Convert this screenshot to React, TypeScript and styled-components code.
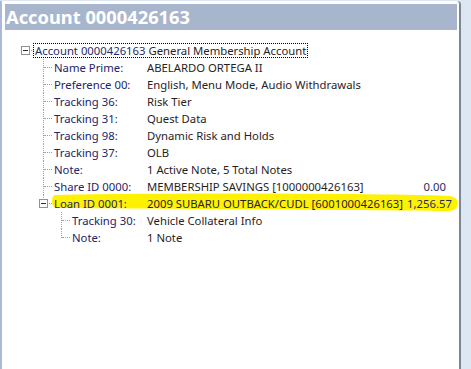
import React from 'react';
import styled, { createGlobalStyle } from 'styled-components';

const Global = createGlobalStyle`
  html, body { margin: 0; padding: 0; }
  body { background: #dce7f3; font-family: "Noto Sans", "Open Sans", sans-serif; }
`;

const Page = styled.div`
  width: 471px;
  height: 369px;
  box-sizing: border-box;
  padding-top: 1px;
  display: flex;
  align-items: stretch;
  background: #dce7f3;
  overflow: hidden;
`;

const Panel = styled.section`
  width: 461px;
  flex: none;
  box-sizing: border-box;
  background: #ffffff;
  border-left: 2px solid #a9bad4;
  border-right: 2px solid #7d8693;
  border-top-right-radius: 4px;
  padding: 3px 2px 0 3px;
  display: flex;
  flex-direction: column;
`;

const Header = styled.h1`
  margin: 0;
  height: 26px;
  padding-left: 1px;
  background: #a8b6cd;
  color: #ffffff;
  font: bold 18.3px/26px "Noto Sans", sans-serif;
`;

const Tree = styled.ul`
  list-style: none;
  margin: 12px 0 0 0;
  padding: 0;
`;

const Row = styled.li<{ $level: number }>`
  position: relative;
  height: 17px;
  display: flex;
  align-items: center;
  padding-left: ${p => 11 + p.$level * 18}px;
  padding-right: 11px;
  font-size: 11.3px;
  line-height: 17px;
  white-space: nowrap;
`;

const Elbow = styled.span<{ $last?: boolean; $root?: boolean }>`
  position: relative;
  z-index: 1;
  flex: none;
  width: 18px;
  height: 17px;
  &::before {
    content: '';
    display: ${p => (p.$root ? 'none' : 'block')};
    position: absolute;
    left: 9px;
    top: 0;
    height: ${p => (p.$last ? '9px' : '17px')};
    border-left: 1px dotted #a0a0a0;
  }
  &::after {
    content: '';
    position: absolute;
    left: 10px;
    right: 0;
    top: 8px;
    border-top: 1px dotted #a0a0a0;
  }
`;

const ExpandBox = styled.span`
  position: absolute;
  z-index: 2;
  left: 5px;
  top: 4px;
  width: 9px;
  height: 9px;
  box-sizing: border-box;
  border: 1px solid #919191;
  background: #ffffff;
  &::after {
    content: '';
    position: absolute;
    left: 1px;
    top: 3px;
    width: 5px;
    height: 1px;
    background: #2b2b2b;
  }
`;

const RootLabel = styled.span`
  position: relative;
  z-index: 1;
  margin-left: -1px;
  padding: 0 1px;
  height: 15px;
  line-height: 14px;
  border: 1px dotted #000000;
  box-sizing: border-box;
  color: #1f2a6b;
`;

const RootName = styled.span`
  color: #2a1d1d;
`;

const Label = styled.span<{ $level: number }>`
  position: relative;
  z-index: 1;
  flex: none;
  box-sizing: border-box;
  width: ${p => 95 - (p.$level - 1) * 18}px;
  padding-left: 2px;
  color: #24246a;
`;

const Value = styled.span`
  position: relative;
  z-index: 1;
  flex: 1;
  display: flex;
  justify-content: space-between;
  color: #2a1d1d;
`;

const Amount = styled.span`
  margin-left: 4px;
  color: #1f2d66;
`;

const Marker = styled.svg`
  position: absolute;
  z-index: 0;
  left: 47px;
  top: -3px;
  width: 408px;
  height: 21px;
  pointer-events: none;
`;

type Node = { label: string; value: string; amount?: string; level: number; last?: boolean; expand?: boolean; mark?: boolean };

const nodes: Node[] = [
  { label: 'Name Prime:', value: 'ABELARDO ORTEGA II', level: 1 },
  { label: 'Preference 00:', value: 'English, Menu Mode, Audio Withdrawals', level: 1 },
  { label: 'Tracking 36:', value: 'Risk Tier', level: 1 },
  { label: 'Tracking 31:', value: 'Quest Data', level: 1 },
  { label: 'Tracking 98:', value: 'Dynamic Risk and Holds', level: 1 },
  { label: 'Tracking 37:', value: 'OLB', level: 1 },
  { label: 'Note:', value: '1 Active Note, 5 Total Notes', level: 1 },
  { label: 'Share ID 0000:', value: 'MEMBERSHIP SAVINGS [1000000426163]', amount: '0.00', level: 1 },
  { label: 'Loan ID 0001:', value: '2009 SUBARU OUTBACK/CUDL [6001000426163]', amount: '1,256.57', level: 1, last: true, expand: true, mark: true },
  { label: 'Tracking 30:', value: 'Vehicle Collateral Info', level: 2 },
  { label: 'Note:', value: '1 Note', level: 2, last: true },
];

export default function App() {
  return (
    <>
      <Global />
      <Page>
        <Panel>
          <Header>Account 0000426163</Header>
          <Tree>
            <Row $level={0}>
              <Elbow $root>
                <ExpandBox />
              </Elbow>
              <RootLabel>
                Account 0000426163 <RootName>General Membership Account</RootName>
              </RootLabel>
            </Row>
            {nodes.map((n, i) => (
              <Row key={i} $level={n.level}>
                {n.mark && (
                  <Marker viewBox="0 0 408 21" preserveAspectRatio="none">
                    <path
                      d="M3,3 C120,1 300,1 398,4 Q407,6 406,12 Q405,19 397,19 C300,18 120,17 4,16 Q0,15 0,9 Q0,4 3,3 Z"
                      fill="#fff200"
                    />
                  </Marker>
                )}
                <Elbow $last={n.last}>{n.expand && <ExpandBox />}</Elbow>
                <Label $level={n.level}>{n.label}</Label>
                <Value>
                  <span>{n.value}</span>
                  {n.amount && <Amount>{n.amount}</Amount>}
                </Value>
              </Row>
            ))}
          </Tree>
        </Panel>
      </Page>
    </>
  );
}
